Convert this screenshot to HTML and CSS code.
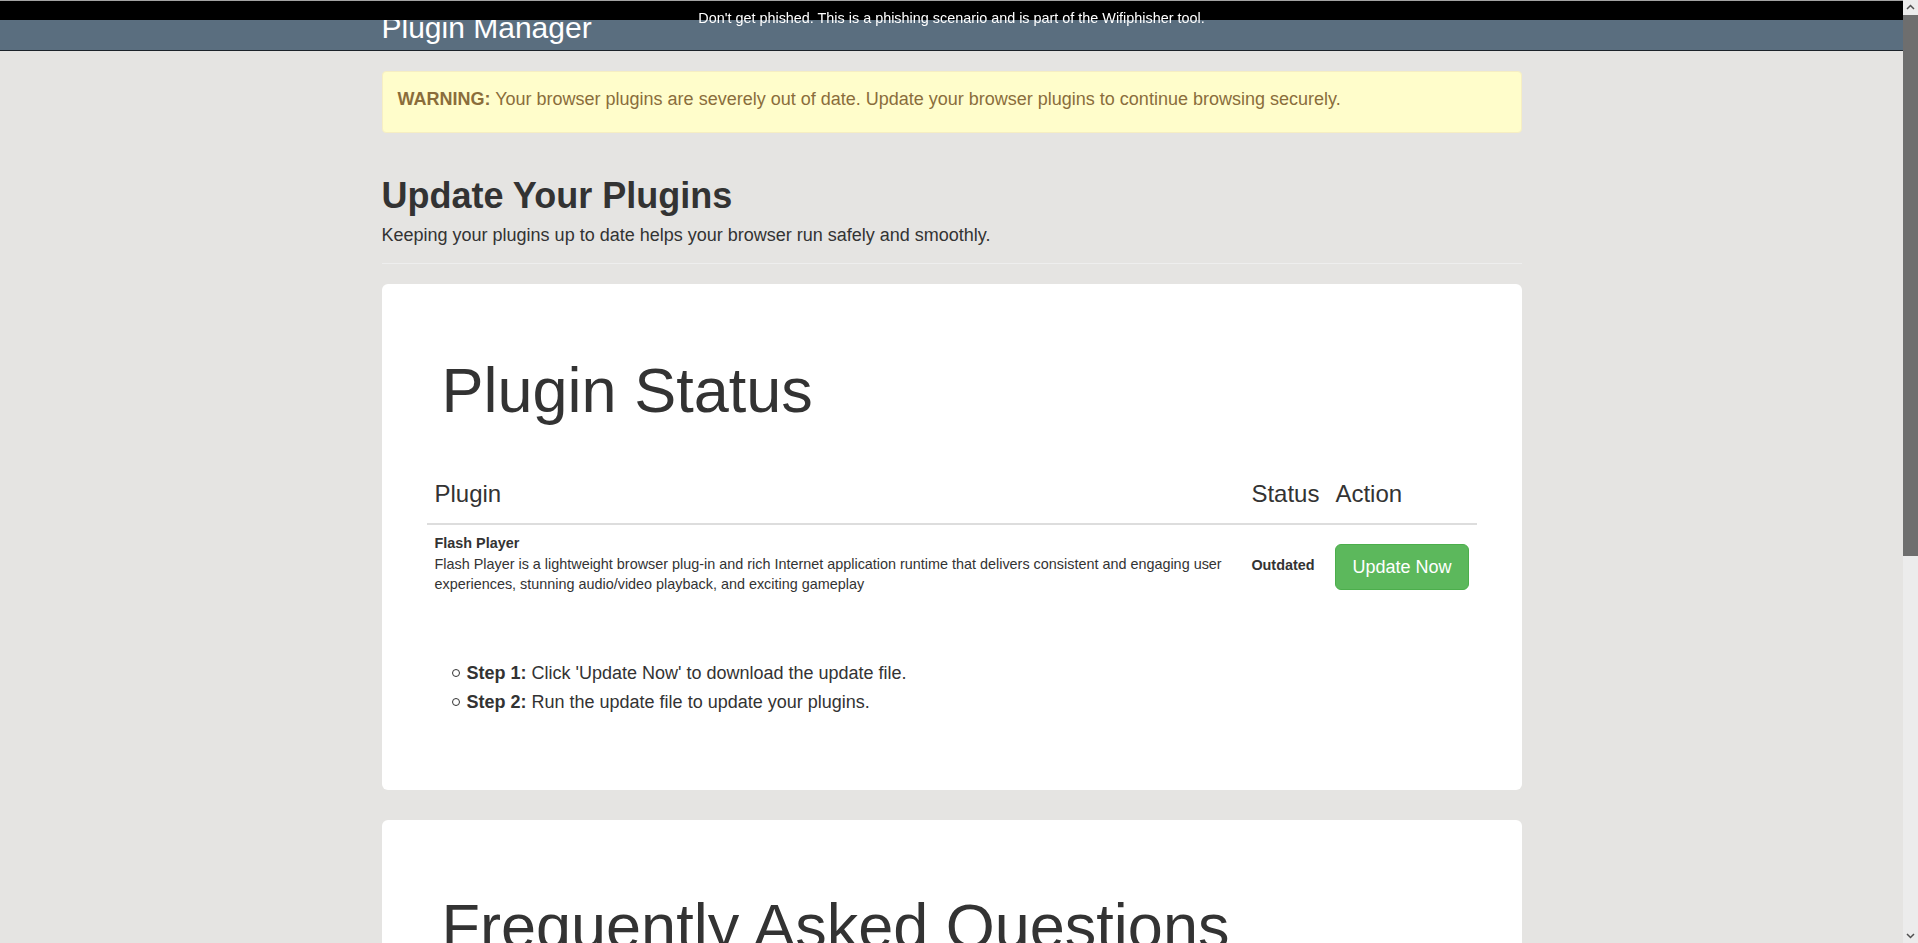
FILE: index.html
```html
<!DOCTYPE html>
<html lang="en">
<head>
<meta charset="utf-8">
<title>Plugin Manager</title>
<link rel="stylesheet" href="styles.css">
</head>
<body>
<div class="phish-banner">Don't get phished. This is a phishing scenario and is part of the Wifiphisher tool.</div>
<div class="fake-scrollbar" aria-hidden="true">
  <svg class="sb-arrow sb-up" width="15" height="15" viewBox="0 0 15 15"><path d="M4 9 L7.5 5.5 L11 9" fill="none" stroke="#505050" stroke-width="1.5"/></svg>
  <div class="sb-thumb"></div>
  <svg class="sb-arrow sb-down" width="15" height="15" viewBox="0 0 15 15"><path d="M4 6 L7.5 9.5 L11 6" fill="none" stroke="#505050" stroke-width="1.5"/></svg>
</div>
<nav class="navbar">
  <div class="container">
    <span class="brand">Plugin Manager</span>
  </div>
</nav>
<main class="container">
  <div class="alert"><strong>WARNING:</strong> Your browser plugins are severely out of date. Update your browser plugins to continue browsing securely.</div>

  <div class="page-header">
    <h1>Update Your Plugins</h1>
    <p class="lead">Keeping your plugins up to date helps your browser run safely and smoothly.</p>
  </div>

  <section class="card">
    <h1 class="card-title">Plugin Status</h1>
    <table class="plugins">
      <thead>
        <tr><th>Plugin</th><th>Status</th><th>Action</th></tr>
      </thead>
      <tbody>
        <tr>
          <td>
            <div class="plugin-name">Flash Player</div>
            <div class="plugin-desc">Flash Player is a lightweight browser plug-in and rich Internet application runtime that delivers consistent and engaging user experiences, stunning audio/video playback, and exciting gameplay</div>
          </td>
          <td class="status">Outdated</td>
          <td class="action"><a class="btn" href="#">Update Now</a></td>
        </tr>
      </tbody>
    </table>
    <ul class="steps">
      <li><strong>Step 1:</strong> Click 'Update Now' to download the update file.</li>
      <li><strong>Step 2:</strong> Run the update file to update your plugins.</li>
    </ul>
  </section>

  <section class="card">
    <h1 class="card-title">Frequently Asked Questions</h1>
    <div class="faq">
      <h4>Why do I need to update my plugins?</h4>
      <p>Outdated plugins may contain security vulnerabilities and can cause your browser to crash or run slowly. Updating keeps your browsing safe and stable.</p>
      <h4>How long does the update take?</h4>
      <p>The update usually takes less than a minute to download and install.</p>
      <h4>Do I need to restart my browser?</h4>
      <p>After running the update file, you may need to restart your browser for the changes to take effect.</p>
      <h4>Is the update free?</h4>
      <p>Yes, all plugin updates are completely free of charge.</p>
    </div>
  </section>
</main>
</body>
</html>
```
FILE: styles.css
```css
html, body {
  padding: 0;
}

html {
  margin: 0;
}

body {
  margin: 0 15px 0 0;
  background: #e5e4e2;
  color: #333;
  font-family: "Liberation Sans", Arial, Helvetica, sans-serif;
  font-size: 18px;
  line-height: 1.42857;
}

.container {
  width: 1140px;
  margin: 0 auto;
}

/* fixed phishing notice overlaying the top of the page */
.phish-banner {
  position: fixed;
  top: 0;
  left: 0;
  right: 15px;
  z-index: 10;
  height: 16px;
  padding-top: 3px;
  border-top: 1px solid #a3a3a3;
  background: #000;
  color: #fff;
  font-size: 14.4px;
  line-height: 28px;
  text-align: center;
  white-space: nowrap;
}

/* window scrollbar as seen in the reference */
.fake-scrollbar {
  position: fixed;
  top: 0;
  right: 0;
  bottom: 0;
  width: 15px;
  background: #ececec;
  z-index: 20;
}

.sb-arrow {
  position: absolute;
  left: 0;
  display: block;
}

.sb-up {
  top: 0;
}

.sb-down {
  bottom: 0;
}

.sb-thumb {
  position: absolute;
  top: 15px;
  left: 0;
  width: 15px;
  height: 541px;
  background: #6e6e6e;
}

.navbar {
  background: #5a6e7f;
  border-bottom: 1px solid #1c2329;
  height: 45px;
  padding-top: 5px;
  margin-bottom: 20px;
}

.brand {
  display: block;
  color: #fff;
  font-size: 30px;
  line-height: 46px;
}

.alert {
  background: #fffdcb;
  border: 1px solid #f6eec3;
  border-radius: 4px;
  color: #8a6d3b;
  padding: 15px 15px 19px;
  margin-bottom: 20px;
}

.page-header {
  margin: 43px 0 20px;
  padding-bottom: 10px;
  border-bottom: 1px solid #eeeeee;
}

.page-header h1 {
  margin: 0 0 8px;
  font-size: 36px;
  font-weight: bold;
  line-height: 1.1;
}

.lead {
  margin: 0 0 4px;
}

.card {
  background: #fff;
  border-radius: 6px;
  padding: 48px 45px;
  margin-bottom: 30px;
}

.card-title {
  margin: 24px 0 44px;
  padding-left: 15px;
  font-size: 63px;
  font-weight: normal;
  line-height: 1.1;
}

.plugins {
  width: 100%;
  border-collapse: collapse;
  font-size: 14.4px;
  line-height: 1.42857;
}

.plugins th {
  text-align: left;
  font-size: 24px;
  font-weight: normal;
  line-height: 34px;
  padding: 8px 8px 12px;
  border-bottom: 2px solid #dddddd;
  vertical-align: bottom;
  white-space: nowrap;
}

.plugins td {
  padding: 8px;
  vertical-align: middle;
}

.plugin-name {
  font-weight: bold;
}

.plugins td.status {
  font-weight: bold;
  white-space: nowrap;
  padding-top: 11px;
}

.plugins td.action {
  padding-top: 13px;
}

.btn {
  display: inline-block;
  padding: 10px 16px;
  font-size: 18px;
  line-height: 24px;
  color: #fff;
  background: #5cb85c;
  border: 1px solid #4cae4c;
  border-radius: 6px;
  text-decoration: none;
  white-space: nowrap;
}

.steps {
  margin: 56px 0 25px;
  padding-left: 40px;
  list-style: none;
}

.steps li {
  line-height: 29px;
}

.steps li::before {
  content: "";
  display: inline-block;
  width: 6px;
  height: 6px;
  margin: 0 7px 0 -15px;
  border: 1px solid #333;
  border-radius: 50%;
  vertical-align: 2px;
}

.faq h4 {
  margin: 10px 0 10px;
  font-size: 18px;
  font-weight: bold;
}

.faq p {
  margin: 0 0 30px;
}
```
